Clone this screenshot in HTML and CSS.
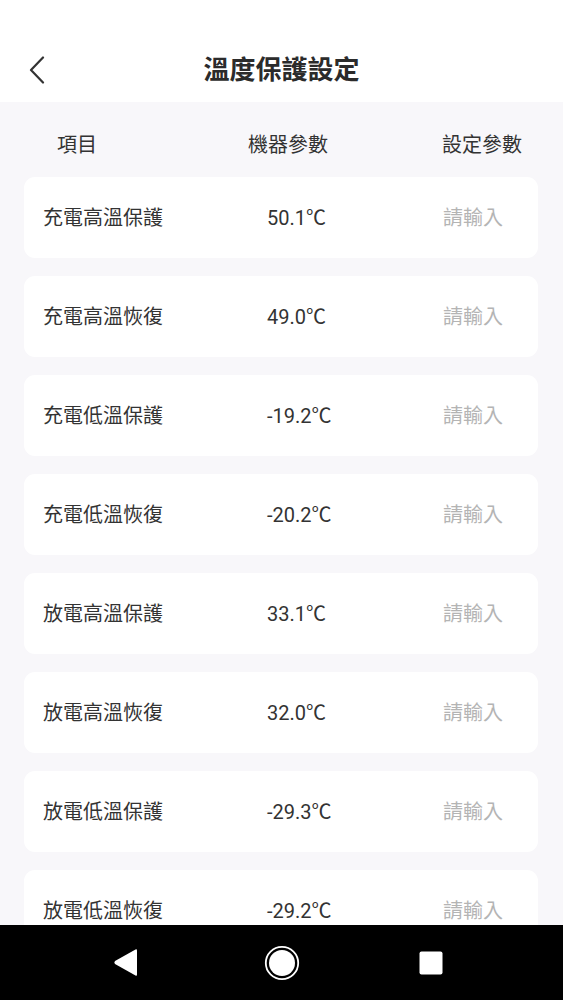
FILE: index.html
```html
<!DOCTYPE html>
<html lang="zh-Hant">
<head>
  <meta charset="UTF-8">
  <meta name="viewport" content="width=device-width, initial-scale=1.0">
  <title>溫度保護設定</title>
  <link rel="stylesheet" href="styles.css">
</head>
<body>
  <header class="top-bar">
    <button class="back-btn" aria-label="返回">
      <svg width="16" height="28" viewBox="0 0 16 28">
        <polyline points="14,1.5 2,14 14,26.5" fill="none" stroke="#333" stroke-width="2.2" stroke-linecap="round" stroke-linejoin="round"/>
      </svg>
    </button>
    <h1 class="title">溫度保護設定</h1>
  </header>

  <main class="content">
    <div class="table-head">
      <span>項目</span>
      <span>機器參數</span>
      <span>設定參數</span>
    </div>

    <ul class="param-list">
      <li class="param-card"><span class="name">充電高溫保護</span><span class="value">50.1℃</span><input class="setting" type="text" placeholder="請輸入"></li>
      <li class="param-card"><span class="name">充電高溫恢復</span><span class="value">49.0℃</span><input class="setting" type="text" placeholder="請輸入"></li>
      <li class="param-card"><span class="name">充電低溫保護</span><span class="value">-19.2℃</span><input class="setting" type="text" placeholder="請輸入"></li>
      <li class="param-card"><span class="name">充電低溫恢復</span><span class="value">-20.2℃</span><input class="setting" type="text" placeholder="請輸入"></li>
      <li class="param-card"><span class="name">放電高溫保護</span><span class="value">33.1℃</span><input class="setting" type="text" placeholder="請輸入"></li>
      <li class="param-card"><span class="name">放電高溫恢復</span><span class="value">32.0℃</span><input class="setting" type="text" placeholder="請輸入"></li>
      <li class="param-card"><span class="name">放電低溫保護</span><span class="value">-29.3℃</span><input class="setting" type="text" placeholder="請輸入"></li>
      <li class="param-card"><span class="name">放電低溫恢復</span><span class="value">-29.2℃</span><input class="setting" type="text" placeholder="請輸入"></li>
    </ul>
  </main>

  <!-- android system nav -->
  <nav class="sys-nav">
    <svg width="26" height="31" viewBox="0 0 26 31">
      <path d="M23.5 2.5 L3 14 Q1.6 15.5 3 17 L23.5 28.5 Q25 29.2 25 27.5 L25 3.5 Q25 1.8 23.5 2.5 Z" fill="#fff"/>
    </svg>
    <svg width="36" height="36" viewBox="0 0 36 36">
      <circle cx="18" cy="18" r="16.2" fill="none" stroke="#fff" stroke-width="1.8"/>
      <circle cx="18" cy="18" r="13" fill="#fff"/>
    </svg>
    <svg width="24" height="24" viewBox="0 0 24 24">
      <rect x="0.5" y="0.5" width="23" height="23" rx="2" fill="#fff"/>
    </svg>
  </nav>
</body>
</html>
```

FILE: styles.css
```css
* {
  box-sizing: border-box;
}

body {
  margin: 0;
  background: #f8f7fa;
  font-family: Roboto, "Noto Sans CJK TC", sans-serif;
  color: #333;
}

.top-bar {
  height: 102px;
  background: #fff;
  display: flex;
  align-items: center;
  justify-content: center;
  position: relative;
  padding-top: 34px;
}

.back-btn {
  position: absolute;
  left: 29px;
  top: 56px;
  border: none;
  background: none;
  padding: 0;
  display: flex;
}

.title {
  margin: 0;
  font-family: "Noto Sans CJK TC", sans-serif;
  font-size: 26px;
  font-weight: 700;
  color: #2b2b2b;
  line-height: 30px;
}

.content {
  padding: 27px 25px 0 24px;
}

.table-head {
  display: grid;
  grid-template-columns: 191px 194px 1fr;
  padding-left: 33px;
  margin-bottom: 19px;
  font-family: "Noto Sans CJK TC", sans-serif;
  font-size: 20px;
  line-height: 29px;
  color: #333;
}

.param-list {
  list-style: none;
  margin: 0;
  padding: 0;
  display: flex;
  flex-direction: column;
  gap: 18px;
}

.param-card {
  height: 81px;
  background: #fff;
  border-radius: 11px;
  display: grid;
  grid-template-columns: 224px 176px 1fr;
  align-items: center;
  padding-left: 19px;
  padding-bottom: 3px;
  font-size: 20px;
}

.name {
  font-family: "Noto Sans CJK TC", sans-serif;
  color: #333;
}

.value {
  color: #333;
}

.setting {
  border: none;
  outline: none;
  background: transparent;
  width: 80px;
  padding: 0;
  font-family: "Noto Sans CJK TC", sans-serif;
  font-size: 20px;
  color: #333;
}

.setting::placeholder {
  color: #b4b4b4;
}

.sys-nav {
  position: fixed;
  left: 0;
  right: 0;
  bottom: 0;
  height: 75px;
  background: #000;
  display: grid;
  grid-template-columns: 250px 63px 250px;
  align-items: center;
  justify-items: center;
}

.sys-nav svg:first-child {
  justify-self: end;
  margin-right: 112px;
}

.sys-nav svg:last-child {
  justify-self: start;
  margin-left: 106px;
}
```
